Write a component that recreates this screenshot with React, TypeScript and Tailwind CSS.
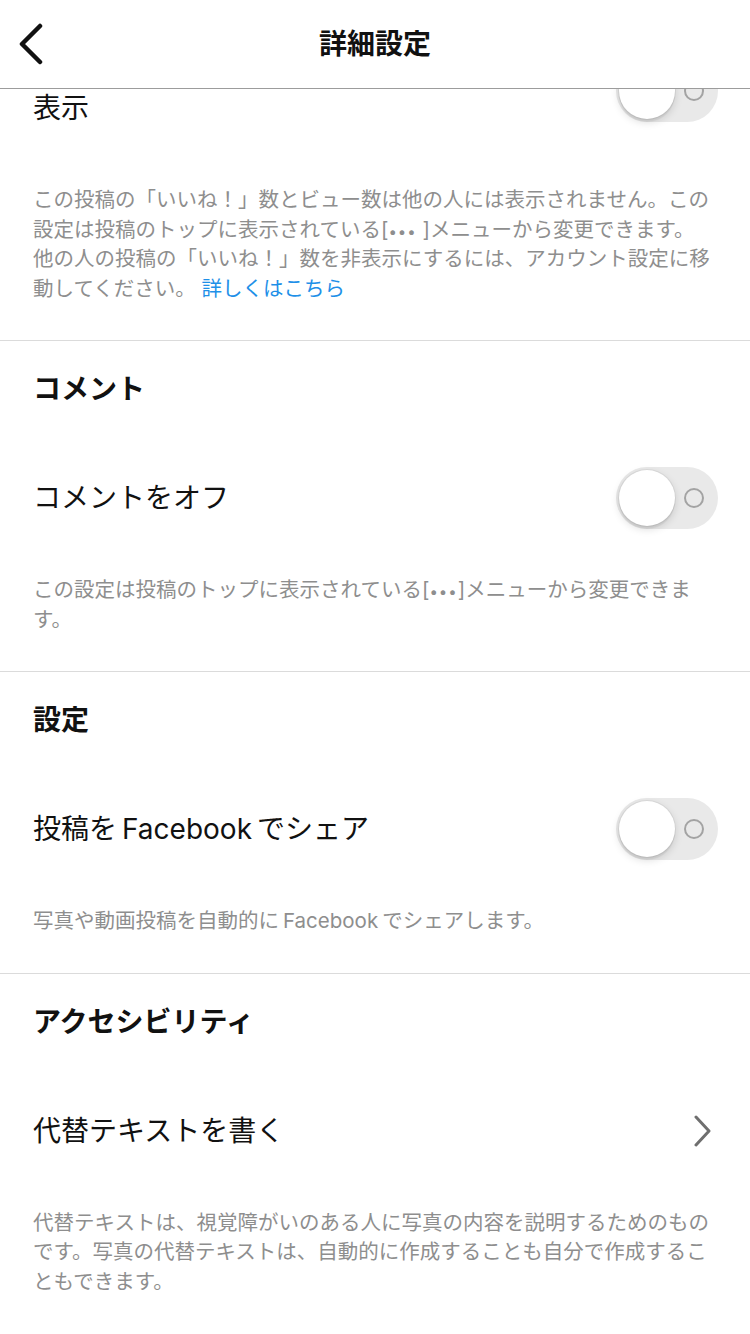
import React from 'react';

const font = { fontFamily: '"Inter", "Noto Sans CJK JP", sans-serif' };

function Toggle() {
  return (
    <div className="flex h-[62px] w-[102px] shrink-0 items-center justify-between rounded-full bg-[#e9e9e9]">
      <div className="ml-[3px] h-[56px] w-[56px] rounded-full bg-white shadow-[0_0_0_1px_rgba(0,0,0,0.05),0_3px_8px_rgba(0,0,0,0.15),0_3px_1px_rgba(0,0,0,0.05)]" />
      <div className="mr-[14px] h-[20px] w-[20px] rounded-full border-2 border-[#a3a3a3]" />
    </div>
  );
}

function ChevronRight() {
  return (
    <svg width="20" height="32" viewBox="0 0 20 32" fill="none" className="mr-[6px]">
      <path d="M4 2 L17 16 L4 30" stroke="#6f6f6f" strokeWidth="3" strokeLinecap="round" strokeLinejoin="round" />
    </svg>
  );
}

function Dots() {
  return <span className="text-[15px] leading-none tracking-[1px]">•••</span>;
}

function SectionHeader({ title }: { title: string }) {
  return (
    <div className="border-t border-[#dbdbdb] px-[33px] pt-[31px]">
      <h2 className="text-[28px] font-bold leading-[34px] text-[#111]">{title}</h2>
    </div>
  );
}

function Description({ children }: { children: React.ReactNode }) {
  return (
    <p className="mb-[37px] mt-[46px] whitespace-nowrap px-[33px] text-[20.5px] leading-[29.5px] text-[#8e8e8e]">
      {children}
    </p>
  );
}

export default function App() {
  return (
    <div className="flex h-[1334px] w-[750px] flex-col overflow-hidden bg-white" style={font}>
      {/* Header */}
      <div className="flex h-[89px] shrink-0 items-center border-b border-[#9c9c9c] bg-white">
        <div className="w-[80px] pl-[17px]">
          <svg width="28" height="42" viewBox="0 0 28 42" fill="none">
            <path d="M23 3 L5 21 L23 39" stroke="#111" strokeWidth="4.5" strokeLinecap="round" strokeLinejoin="round" />
          </svg>
        </div>
        <h1 className="flex-1 text-center text-[28px] font-bold text-[#111]">詳細設定</h1>
        <div className="w-[80px]" />
      </div>

      {/* Scrolled content, clipped under the header */}
      <div className="flex-1 overflow-hidden">
        <div className="-mt-[32px]">
          {/* Likes */}
          <div className="flex items-center justify-between pl-[33px] pr-[32px]">
            <p className="text-[28px] leading-[34px] text-[#111]">
              「いいね！」数とビュー数を非
              <br />
              表示
            </p>
            <Toggle />
          </div>
          <p className="mb-[37px] mt-[60px] whitespace-nowrap px-[33px] text-[20.5px] leading-[29.5px] text-[#8e8e8e]">
            この投稿の「いいね！」数とビュー数は他の人には表示されません。この
            <br />
            設定は投稿のトップに表示されている[<Dots /> ]メニューから変更できます。
            <br />
            他の人の投稿の「いいね！」数を非表示にするには、アカウント設定に移
            <br />
            動してください。 <span className="text-[#1e90e8]">詳しくはこちら</span>
          </p>

          {/* Comments */}
          <SectionHeader title="コメント" />
          <div className="mt-[61px] flex min-h-[62px] items-center justify-between pl-[33px] pr-[32px]">
            <p className="text-[28px] leading-[34px] text-[#111]">コメントをオフ</p>
            <Toggle />
          </div>
          <Description>
            この設定は投稿のトップに表示されている[<Dots />]メニューから変更できま
            <br />
            す。
          </Description>

          {/* Settings */}
          <SectionHeader title="設定" />
          <div className="mt-[61px] flex min-h-[62px] items-center justify-between pl-[33px] pr-[32px]">
            <p className="text-[28px] leading-[34px] text-[#111]">
              投稿を<span className="mx-[5px]">Facebook</span>でシェア
            </p>
            <Toggle />
          </div>
          <Description>
            写真や動画投稿を自動的に<span className="mx-[4px]">Facebook</span>でシェアします。
          </Description>

          {/* Accessibility */}
          <SectionHeader title="アクセシビリティ" />
          <div className="mt-[61px] flex min-h-[62px] items-center justify-between pl-[33px] pr-[32px]">
            <p className="text-[28px] leading-[34px] text-[#111]">代替テキストを書く</p>
            <ChevronRight />
          </div>
          <Description>
            代替テキストは、視覚障がいのある人に写真の内容を説明するためのもの
            <br />
            です。写真の代替テキストは、自動的に作成することも自分で作成するこ
            <br />
            ともできます。
          </Description>
        </div>
      </div>
    </div>
  );
}
